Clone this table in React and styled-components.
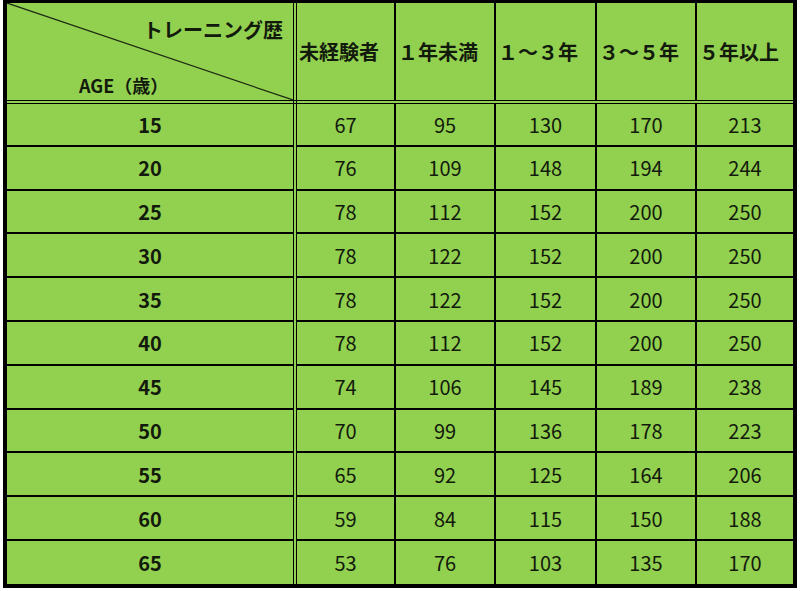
import React from "react";
import styled, { createGlobalStyle } from "styled-components";

const GlobalStyle = createGlobalStyle`
  html, body {
    margin: 0;
    padding: 0;
    background: #ffffff;
  }
  body {
    font-family: "Noto Sans CJK JP", "Noto Sans", sans-serif;
  }
`;

const columns = ["未経験者", "１年未満", "１～３年", "３～５年", "５年以上"];

const rows = [
  [15, 67, 95, 130, 170, 213],
  [20, 76, 109, 148, 194, 244],
  [25, 78, 112, 152, 200, 250],
  [30, 78, 122, 152, 200, 250],
  [35, 78, 122, 152, 200, 250],
  [40, 78, 112, 152, 200, 250],
  [45, 74, 106, 145, 189, 238],
  [50, 70, 99, 136, 178, 223],
  [55, 65, 92, 125, 164, 206],
  [60, 59, 84, 115, 150, 188],
  [65, 53, 76, 103, 135, 170],
];

const App = () => {
  return (
    <>
      <GlobalStyle />
      <Frame>
        <Table>
          <colgroup>
            <col style={{ width: 288 }} />
            <col style={{ width: 100 }} />
            <col style={{ width: 100 }} />
            <col style={{ width: 101 }} />
            <col style={{ width: 100 }} />
            <col style={{ width: 97 }} />
          </colgroup>
          <thead>
            <HeadRow>
              <CornerCell>
                <Diagonal preserveAspectRatio="none" viewBox="0 0 100 100">
                  <line
                    x1="0"
                    y1="0"
                    x2="100"
                    y2="100"
                    stroke="#1d2a12"
                    strokeWidth="1.2"
                    vectorEffect="non-scaling-stroke"
                  />
                </Diagonal>
                <CornerInner>
                  <TopLabel>トレーニング歴</TopLabel>
                  <BottomLabel>AGE（歳）</BottomLabel>
                </CornerInner>
              </CornerCell>
              {columns.map((c) => (
                <HeadCell key={c}>{c}</HeadCell>
              ))}
            </HeadRow>
          </thead>
          <tbody>
            {rows.map(([age, ...vals]) => (
              <BodyRow key={age}>
                <AgeCell>{age}</AgeCell>
                {vals.map((v, i) => (
                  <Cell key={i}>{v}</Cell>
                ))}
              </BodyRow>
            ))}
          </tbody>
        </Table>
      </Frame>
    </>
  );
};

export default App;

const Frame = styled.div`
  box-sizing: border-box;
  width: 794px;
  margin-left: 3px;
  border: 4px solid #000;
  border-top-width: 3px;
  background: #92d050;
`;

const Table = styled.table`
  width: 100%;
  table-layout: fixed;
  border-collapse: collapse;
  border-style: hidden;
  color: #121a0c;
`;

const HeadRow = styled.tr`
  height: 97px;
`;

const BodyRow = styled.tr`
  height: 43.8px;
`;

const BaseCell = styled.td`
  padding: 0;
  border: 2px solid #000;
  text-align: center;
  vertical-align: middle;
`;

const HeadCell = styled(BaseCell).attrs({ as: "th" })`
  font-size: 20px;
  font-weight: 700;
  text-align: left;
  padding-left: 2px;
  white-space: nowrap;
  border-bottom: 4px double #000;
`;

const CornerCell = styled(BaseCell).attrs({ as: "th" })`
  position: relative;
  border-bottom: 4px double #000;
  border-right: 4px double #000;
  font-weight: 700;
`;

const Diagonal = styled.svg`
  position: absolute;
  inset: 0;
  width: 100%;
  height: 100%;
`;

const CornerInner = styled.div`
  display: flex;
  flex-direction: column;
  justify-content: space-between;
  height: 97px;
  box-sizing: border-box;
  padding: 12px 10px 1px 72px;
`;

const TopLabel = styled.span`
  align-self: flex-end;
  font-size: 20px;
  line-height: 30px;
`;

const BottomLabel = styled.span`
  align-self: flex-start;
  font-size: 18px;
  line-height: 28px;
`;

const AgeCell = styled(BaseCell)`
  font-size: 20px;
  font-weight: 700;
  border-right: 4px double #000;
`;

const Cell = styled(BaseCell)`
  font-size: 20px;
  font-weight: 400;
`;
